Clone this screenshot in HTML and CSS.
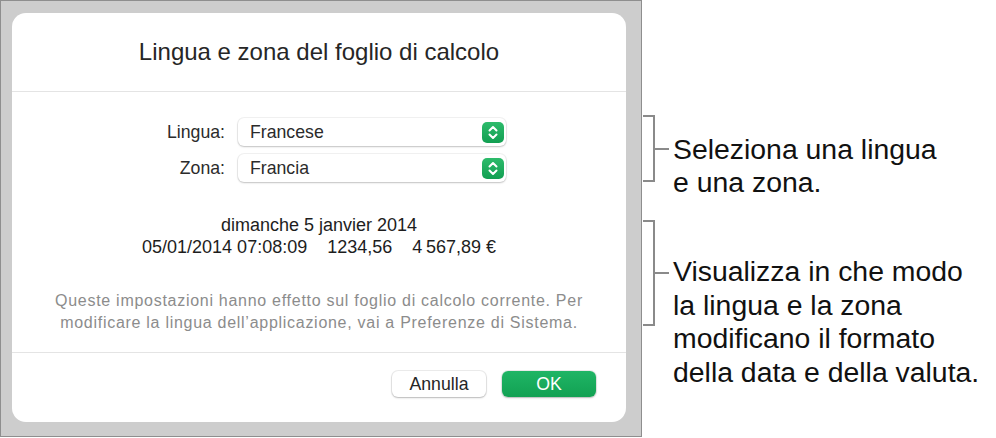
FILE: index.html
```html
<!DOCTYPE html>
<html lang="it">
<head>
<meta charset="utf-8">
<title>Lingua e zona del foglio di calcolo</title>
<link rel="stylesheet" href="styles.css">
</head>
<body>
<div class="page">
  <div class="frame">
    <div class="dialog">
      <header class="dlg-head">
        <h1 class="dlg-title">Lingua e zona del foglio di calcolo</h1>
      </header>
      <section class="dlg-body">
        <div class="form">
          <span class="form-label">Lingua:</span>
          <div class="popup">
            <span class="popup-value">Francese</span>
            <svg class="stepper" width="22" height="21" viewBox="0 0 22 21">
              <defs>
                <linearGradient id="g1" x1="0" y1="0" x2="0" y2="1">
                  <stop offset="0" stop-color="#2dbb6b"/>
                  <stop offset="1" stop-color="#129f52"/>
                </linearGradient>
              </defs>
              <rect x="0" y="0" width="22" height="21" rx="5" fill="url(#g1)"/>
              <polyline points="7.5,8.5 11,5 14.5,8.5" fill="none" stroke="#fff" stroke-width="2" stroke-linecap="round" stroke-linejoin="round"/>
              <polyline points="7.5,12.5 11,16 14.5,12.5" fill="none" stroke="#fff" stroke-width="2" stroke-linecap="round" stroke-linejoin="round"/>
            </svg>
          </div>
          <span class="form-label">Zona:</span>
          <div class="popup">
            <span class="popup-value">Francia</span>
            <svg class="stepper" width="22" height="21" viewBox="0 0 22 21">
              <defs>
                <linearGradient id="g2" x1="0" y1="0" x2="0" y2="1">
                  <stop offset="0" stop-color="#2dbb6b"/>
                  <stop offset="1" stop-color="#129f52"/>
                </linearGradient>
              </defs>
              <rect x="0" y="0" width="22" height="21" rx="5" fill="url(#g2)"/>
              <polyline points="7.5,8.5 11,5 14.5,8.5" fill="none" stroke="#fff" stroke-width="2" stroke-linecap="round" stroke-linejoin="round"/>
              <polyline points="7.5,12.5 11,16 14.5,12.5" fill="none" stroke="#fff" stroke-width="2" stroke-linecap="round" stroke-linejoin="round"/>
            </svg>
          </div>
        </div>
        <div class="preview">
          <div class="preview-line">dimanche 5 janvier 2014</div>
          <div class="preview-line preview-nums">
            <span>05/01/2014 07:08:09</span>
            <span>1234,56</span>
            <span>4&#8239;567,89&nbsp;€</span>
          </div>
        </div>
        <p class="note">Queste impostazioni hanno effetto sul foglio di calcolo corrente. Per<br>modificare la lingua dell’applicazione, vai a Preferenze di Sistema.</p>
      </section>
      <footer class="dlg-foot">
        <button class="btn">Annulla</button>
        <button class="btn btn-primary">OK</button>
      </footer>
    </div>
  </div>
  <aside class="callouts">
    <div class="callout callout-lang">
      <div class="bracket-wrap bracket-short">
        <div class="bracket"></div>
        <div class="tick"></div>
      </div>
      <p class="callout-text">Seleziona una lingua<br>e una zona.</p>
    </div>
    <div class="callout callout-format">
      <div class="bracket-wrap bracket-tall">
        <div class="bracket"></div>
        <div class="tick"></div>
      </div>
      <p class="callout-text">Visualizza in che modo<br>la lingua e la zona<br>modificano il formato<br>della data e della valuta.</p>
    </div>
  </aside>
</div>
</body>
</html>
```

FILE: styles.css
```css
* {
  box-sizing: border-box;
}

body {
  margin: 0;
  background: #ffffff;
  font-family: "Liberation Sans", Arial, sans-serif;
}

.page {
  display: flex;
  width: 996px;
  height: 438px;
}

.frame {
  flex: none;
  width: 642px;
  height: 437px;
  border: 1px solid #8e8e8e;
  background: #cdcdcd;
  padding: 12px 15px 14px 11px;
}

.dialog {
  height: 409px;
  background: #ffffff;
  border-radius: 14px;
  display: flex;
  flex-direction: column;
}

.dlg-head {
  padding: 24px 0;
  border-bottom: 1px solid #e4e4e4;
}

.dlg-title {
  margin: 0;
  font-size: 24px;
  line-height: 30px;
  font-weight: 400;
  text-align: center;
  color: #262626;
}

.dlg-body {
  flex: 1;
  padding-top: 26px;
  border-bottom: 1px solid #e4e4e4;
}

.form {
  display: grid;
  grid-template-columns: 213px 268px;
  column-gap: 13px;
  row-gap: 8px;
  align-items: center;
}

.form-label {
  text-align: right;
  font-size: 17.7px;
  color: #2b2b2b;
}

.popup {
  height: 28px;
  display: flex;
  align-items: center;
  justify-content: space-between;
  padding: 0 2px 0 12px;
  border-radius: 6px;
  background: #ffffff;
  box-shadow: 0 0 0 1px rgba(0, 0, 0, 0.05), 0 1px 2px rgba(0, 0, 0, 0.2);
  font-size: 17.7px;
  color: #2b2b2b;
}

.stepper {
  display: block;
  flex: none;
}

.preview {
  margin-top: 33px;
  text-align: center;
  font-size: 18px;
  line-height: 21.6px;
  color: #1d1d1d;
}

.preview-nums {
  display: flex;
  justify-content: center;
  gap: 20px;
}

.note {
  margin: 32px 0 0;
  text-align: center;
  font-size: 16px;
  line-height: 21.7px;
  letter-spacing: 0.72px;
  color: #8c8c8c;
}

.dlg-foot {
  flex: none;
  height: 69px;
  display: flex;
  justify-content: flex-end;
  align-items: flex-start;
  gap: 16px;
  padding: 18px 30px 0 0;
}

.btn {
  width: 94px;
  height: 26px;
  padding: 0;
  border: none;
  border-radius: 6px;
  font-family: "Liberation Sans", Arial, sans-serif;
  font-size: 17.7px;
  line-height: 26px;
  background: #ffffff;
  color: #262626;
  box-shadow: 0 0 0 1px rgba(0, 0, 0, 0.07), 0 1px 2px rgba(0, 0, 0, 0.22);
}

.btn-primary {
  background: linear-gradient(#1fb565, #12a153);
  color: #ffffff;
}

.callouts {
  flex: 1;
  padding-top: 115px;
  display: flex;
  flex-direction: column;
}

.callout {
  display: flex;
  align-items: flex-start;
}

.callout-format {
  margin-top: 20.5px;
}

.bracket-wrap {
  display: flex;
  align-items: center;
  margin-left: 1px;
}

.bracket-short {
  height: 67px;
}

.bracket-tall {
  height: 106px;
}

.bracket {
  width: 12px;
  height: 100%;
  border: 2px solid #8a8a8a;
  border-left: none;
}

.tick {
  width: 14px;
  height: 2px;
  background: #8a8a8a;
}

.callout-text {
  margin: 17.5px 0 0 4px;
  font-size: 28.4px;
  line-height: 33.5px;
  color: #111111;
  white-space: nowrap;
}

.callout-format .callout-text {
  margin-top: 35.2px;
}
```
